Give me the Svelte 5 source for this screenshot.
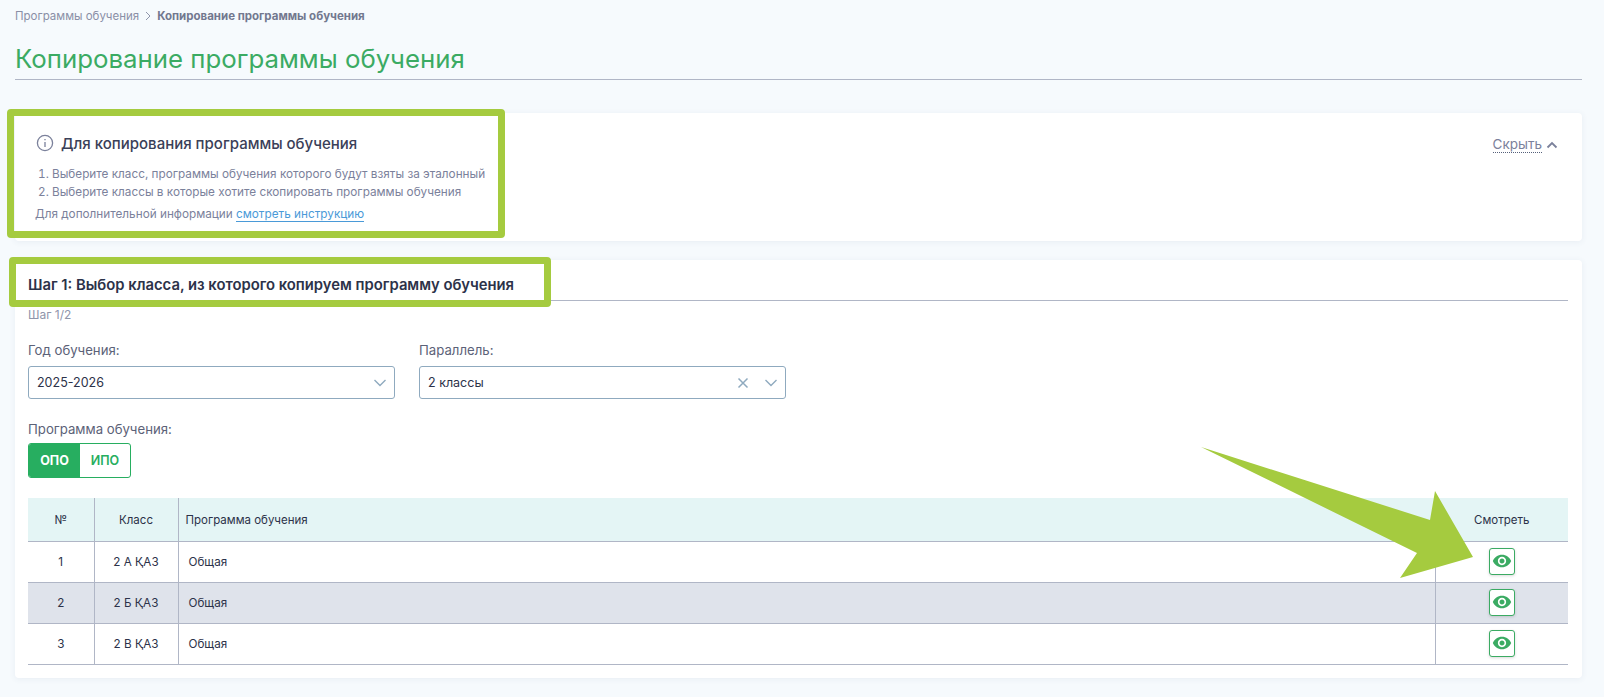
<script>
  const rows = [
    { n: 1, cls: '2 А ҚАЗ', alt: false },
    { n: 2, cls: '2 Б ҚАЗ', alt: true },
    { n: 3, cls: '2 В ҚАЗ', alt: false }
  ];
</script>

<div class="page">
  <nav class="crumbs">
    <span>Программы обучения</span>
    <svg class="sep" width="8" height="10" viewBox="0 0 8 10"><path d="M2 1l4 4-4 4" fill="none" stroke="#8f95ab" stroke-width="1"/></svg>
    <b>Копирование программы обучения</b>
  </nav>
  <h1>Копирование программы обучения</h1>

  <section class="card info">
    <div class="info-body">
      <div class="info-head">
        <svg width="18" height="18" viewBox="0 0 18 18" fill="none" stroke="#7b819b" stroke-width="1.3"><circle cx="9" cy="9" r="7.6"/><path d="M9 8v5M9 5v1.3"/></svg>
        <h2>Для копирования программы обучения</h2>
      </div>
      <ol>
        <li>Выберите класс, программы обучения которого будут взяты за эталонный</li>
        <li>Выберите классы в которые хотите скопировать программы обучения</li>
      </ol>
      <p>Для дополнительной информации <a href="#top">смотреть инструкцию</a></p>
    </div>
    <div class="hide">
      <span>Скрыть</span>
      <svg width="12" height="8" viewBox="0 0 12 8" fill="none" stroke="#7b819b" stroke-width="1.8"><path d="M1.5 6.5L6 2l4.500 4.500"/></svg>
    </div>
  </section>

  <section class="card step">
    <h2 class="step-title">Шаг 1: Выбор класса, из которого копируем программу обучения</h2>
    <div class="step-count">Шаг 1/2</div>
    <div class="filters">
      <div class="field">
        <span class="label">Год обучения:</span>
        <div class="select">
          <span class="value">2025-2026</span>
          <svg class="chev" width="14" height="8" viewBox="0 0 14 8" fill="none" stroke="#8faabf" stroke-width="1.4"><path d="M1.500 1L7 6.500 12.500 1"/></svg>
        </div>
      </div>
      <div class="field">
        <span class="label">Параллель:</span>
        <div class="select">
          <span class="value">2 классы</span>
          <svg class="x" width="12" height="12" viewBox="0 0 12 12" fill="none" stroke="#8faabf" stroke-width="1.500"><path d="M1.500 1.500l9 9M10.500 1.500l-9 9"/></svg>
          <svg class="chev" width="14" height="8" viewBox="0 0 14 8" fill="none" stroke="#8faabf" stroke-width="1.4"><path d="M1.500 1L7 6.500 12.500 1"/></svg>
        </div>
      </div>
    </div>
    <div class="label prog">Программа обучения:</div>
    <div class="toggle">
      <span class="on">ОПО</span>
      <span class="off">ИПО</span>
    </div>
    <table>
      <colgroup>
        <col class="c1" /><col class="c2" /><col /><col class="c4" />
      </colgroup>
      <thead>
        <tr>
          <th>№</th>
          <th>Класс</th>
          <th class="left">Программа обучения</th>
          <th>Смотреть</th>
        </tr>
      </thead>
      <tbody>
        {#each rows as r}
          <tr class:alt={r.alt}>
            <td>{r.n}</td>
            <td>{r.cls}</td>
            <td class="left">Общая</td>
            <td>
              <span class="eye">
                <svg width="20" height="20" viewBox="0 0 24 24" fill="#3bab63"><path d="M12 4.500C7 4.500 2.730 7.610 1 12c1.730 4.390 6 7.500 11 7.500s9.270-3.110 11-7.500c-1.730-4.390-6-7.500-11-7.500zM12 17c-2.760 0-5-2.240-5-5s2.240-5 5-5 5 2.240 5 5-2.240 5-5 5zm0-8c-1.660 0-3 1.340-3 3s1.340 3 3 3 3-1.340 3-3-1.340-3-3-3z"/></svg>
              </span>
            </td>
          </tr>
        {/each}
      </tbody>
    </table>
  </section>

  <div class="mark mark1"></div>
  <div class="mark mark2"></div>
  <svg class="arrow" width="1604" height="697" viewBox="0 0 1604 697"><polygon points="1201,447 1430,520 1435,491 1473,557 1400,578 1417,553" fill="#a5cb3f"/></svg>
</div>

<style>
  :global(body) {
    margin: 0;
    background: #f6fafd;
  }
  .page {
    position: relative;
    box-sizing: border-box;
    width: 1604px;
    height: 697px;
    overflow: hidden;
    padding: 7px 22px 0 15px;
    font-family: Inter, "Liberation Sans", sans-serif;
    color: #2c3249;
  }
  .crumbs {
    display: flex;
    align-items: center;
    gap: 5px;
    height: 18px;
    font-size: 11.500px;
    color: #8a8fa6;
  }
  .crumbs b {
    font-weight: 700;
    color: #72788f;
  }
  h1 {
    margin: 15px 0 0;
    height: 39px;
    line-height: 37px;
    font-size: 25.800px;
    font-weight: 400;
    color: #3bab63;
    border-bottom: 1px solid #b0b6c6;
  }
  .card {
    background: #fff;
    border-radius: 4px;
    box-shadow: 0 1px 6px rgba(70, 90, 130, 0.08);
  }
  .info {
    display: flex;
    justify-content: space-between;
    margin-top: 33px;
    height: 128px;
    padding: 19px 24px 0 20px;
    box-sizing: border-box;
  }
  .info-head {
    display: flex;
    align-items: center;
    gap: 7px;
    margin-left: 1px;
    height: 22px;
  }
  .info h2 {
    margin: 0;
    font-size: 15px;
    font-weight: 500;
    color: #3a4058;
  }
  ol {
    margin: 11px 0 0;
    padding: 0 0 0 17px;
    font-size: 11.750px;
    line-height: 18px;
    color: #7b819b;
  }
  .info p {
    margin: 4px 0 0;
    font-size: 11.750px;
    line-height: 18px;
    color: #7b819b;
  }
  .info a {
    color: #4a9ad8;
    text-decoration: none;
    border-bottom: 1px solid #4a9ad8;
  }
  .hide {
    display: flex;
    align-items: center;
    gap: 4px;
    height: 20px;
    margin-top: 3px;
    font-size: 13.500px;
    color: #7b819b;
  }
  .hide span {
    border-bottom: 1px dotted #55607a;
    line-height: 15px;
  }
  .step {
    margin-top: 19px;
    height: 418px;
    padding: 14px 14px 0 13px;
    box-sizing: border-box;
  }
  .step-title {
    margin: 0;
    height: 26px;
    line-height: 22px;
    font-size: 14.800px;
    font-weight: 600;
    color: #2c3249;
    border-bottom: 1px solid #b0b6c6;
  }
  .step-count {
    margin-top: 7px;
    font-size: 12px;
    line-height: 14px;
    color: #8f95ab;
  }
  .filters {
    display: flex;
    gap: 24px;
    margin-top: 20px;
  }
  .field {
    width: 367px;
  }
  .label {
    display: block;
    font-size: 13.200px;
    line-height: 16px;
    color: #5c6278;
  }
  .select {
    display: flex;
    align-items: center;
    box-sizing: border-box;
    height: 33px;
    margin-top: 8px;
    padding: 0 7px 0 8px;
    background: #fff;
    border: 1px solid #8faabf;
    border-radius: 3px;
  }
  .value {
    flex: 1;
    font-size: 12.500px;
    color: #2c3249;
  }
  .x {
    margin-right: 15px;
  }
  .prog {
    margin-top: 22px;
  }
  .toggle {
    display: flex;
    width: 103px;
    height: 35px;
    margin-top: 6px;
    box-sizing: border-box;
    border: 1px solid #27ae60;
    border-radius: 3px;
    overflow: hidden;
    font-size: 12.500px;
    font-weight: 600;
    line-height: 33px;
    text-align: center;
  }
  .on {
    width: 51px;
    background: #27ae60;
    color: #fff;
    font-weight: 700;
  }
  .off {
    flex: 1;
    color: #27ae60;
  }
  table {
    width: 1540px;
    margin-top: 20px;
    border-collapse: collapse;
    table-layout: fixed;
    font-size: 11.500px;
    color: #2c3249;
  }
  .c1 { width: 66px; }
  .c2 { width: 84px; }
  .c4 { width: 133px; }
  th {
    height: 43px;
    padding: 0;
    background: #e4f5f5;
    font-weight: 400;
    text-align: center;
    border-bottom: 1px solid #b0b6c6;
  }
  td {
    height: 40px;
    padding: 0;
    text-align: center;
    font-size: 11.700px;
    border-bottom: 1px solid #b0b6c6;
  }
  th + th, td + td {
    border-left: 1px solid #b0b6c6;
  }
  th.left { text-align: left; padding-left: 7px; }
  td.left { text-align: left; padding-left: 10px; }
  tr.alt td { background: #dfe3eb; }
  .eye {
    display: inline-flex;
    align-items: center;
    justify-content: center;
    box-sizing: border-box;
    width: 26px;
    height: 27px;
    margin-bottom: 2px;
    vertical-align: middle;
    background: #fff;
    border: 1px solid #3bab63;
    border-radius: 3px;
    box-shadow: 0 1px 3px rgba(0, 0, 0, 0.15);
  }
  .mark {
    position: absolute;
    box-sizing: border-box;
    border: 7px solid #a5cb3f;
    border-radius: 4px;
    pointer-events: none;
  }
  .mark1 {
    left: 7px;
    top: 109px;
    width: 498px;
    height: 129px;
  }
  .mark2 {
    left: 9px;
    top: 257px;
    width: 542px;
    height: 50px;
  }
  .arrow {
    position: absolute;
    left: 0;
    top: 0;
    pointer-events: none;
  }
</style>
